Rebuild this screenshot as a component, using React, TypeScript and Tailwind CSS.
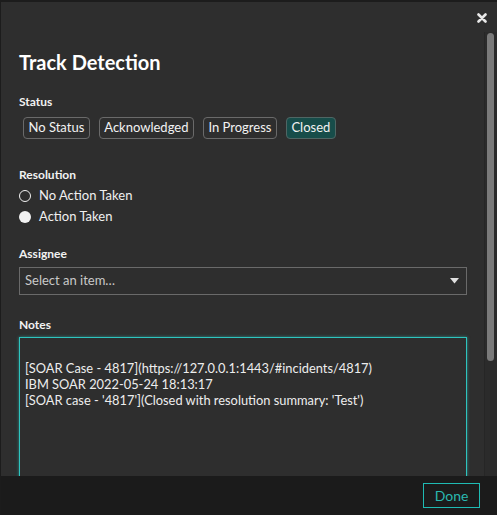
type Status = 'No Status' | 'Acknowledged' | 'In Progress' | 'Closed';

const statuses: Status[] = ['No Status', 'Acknowledged', 'In Progress', 'Closed'];

const notes =
  "\n[SOAR Case - 4817](https://127.0.0.1:1443/#incidents/4817)\nIBM SOAR 2022-05-24 18:13:17\n[SOAR case - '4817'](Closed with resolution summary: 'Test')";

function Radio({ label, checked }: { label: string; checked?: boolean }) {
  return (
    <div className="flex items-center h-[21px]">
      <span
        className={
          checked
            ? 'w-[12px] h-[12px] rounded-full bg-[#f2f2f2]'
            : 'w-[12px] h-[12px] rounded-full border-[1.5px] border-[#f2f2f2]'
        }
      />
      <span className="ml-[8px] text-[13px] text-[#f0f0f0]">{label}</span>
    </div>
  );
}

export default function App() {
  const current: Status = 'Closed';

  return (
    <div
      className="w-[497px] h-[515px] flex flex-col bg-[#2e2e2e] border-t-2 border-l border-[#1c1c1c] overflow-hidden"
      style={{ fontFamily: 'Lato, "Open Sans", sans-serif' }}
    >
      <div className="h-[30px] flex justify-end items-center pr-[10px] shrink-0">
        <svg width="10" height="10" viewBox="0 0 10 10" className="mt-[1px]">
          <path d="M1.5 1.5 L8.5 8.5 M8.5 1.5 L1.5 8.5" stroke="#e8e8e8" strokeWidth="2.6" strokeLinecap="round" />
        </svg>
      </div>

      <div className="flex flex-1 min-h-0">
        <div className="flex-1 min-w-0 pl-[18px] pr-[17px] overflow-hidden">
          <h1 className="mt-[18px] text-[20px] leading-[24px] font-bold text-white">Track Detection</h1>

          <div className="mt-[20px] text-[12px] leading-[16px] font-bold text-[#f2f2f2]">Status</div>
          <div className="mt-[7px] flex gap-[9px] pl-[4px]">
            {statuses.map((s) => (
              <button
                key={s}
                className={
                  s === current
                    ? 'h-[22px] px-[4.5px] rounded-[4px] border border-[#4f6664] bg-[#174d4a] text-[13px] text-[#f2f2f2]'
                    : 'h-[22px] px-[4.5px] rounded-[4px] border border-[#6a6a6a] text-[13px] text-[#f2f2f2]'
                }
              >
                {s}
              </button>
            ))}
          </div>

          <div className="mt-[28px] text-[12px] leading-[16px] font-bold text-[#f2f2f2]">Resolution</div>
          <div className="mt-[2px]">
            <Radio label="No Action Taken" />
            <Radio label="Action Taken" checked />
          </div>

          <div className="mt-[19px] text-[12px] leading-[16px] font-bold text-[#f2f2f2]">Assignee</div>
          <div className="mt-[5px] h-[28px] border border-[#6a6a6a] flex items-center justify-between pl-[5px] pr-[7px]">
            <span className="text-[13px] text-[#c9c9c9]">Select an item…</span>
            <svg width="9" height="6" viewBox="0 0 9 6">
              <path d="M0 0 H9 L4.5 5.5 Z" fill="#e0e0e0" />
            </svg>
          </div>

          <div className="mt-[22px] text-[12px] leading-[16px] font-bold text-[#f2f2f2]">Notes</div>
          <textarea
            readOnly
            defaultValue={notes}
            className="mt-[4px] block w-full h-[170px] resize-none bg-transparent border border-[#2ec5bf] shadow-[0_0_3px_rgba(46,197,191,0.6)] px-[5px] py-[6px] text-[12.85px] leading-[16px] text-[#ededed] outline-none"
            style={{ fontFamily: 'Lato, "Open Sans", sans-serif' }}
          />
        </div>

        <div className="w-[13px] shrink-0 border-l border-[#262626] bg-[#2b2b2b] pt-[1px] pl-[2px]">
          <div className="w-[7px] h-[328px] rounded-full bg-[#7a7a7a]" />
        </div>
      </div>

      <div className="h-[39px] shrink-0 bg-[#1b1b1b] flex items-center justify-end pr-[17px]">
        <button className="w-[57px] h-[25px] border border-[#1fbab3] text-[14px] text-[#2ab8b0]">Done</button>
      </div>
    </div>
  );
}
